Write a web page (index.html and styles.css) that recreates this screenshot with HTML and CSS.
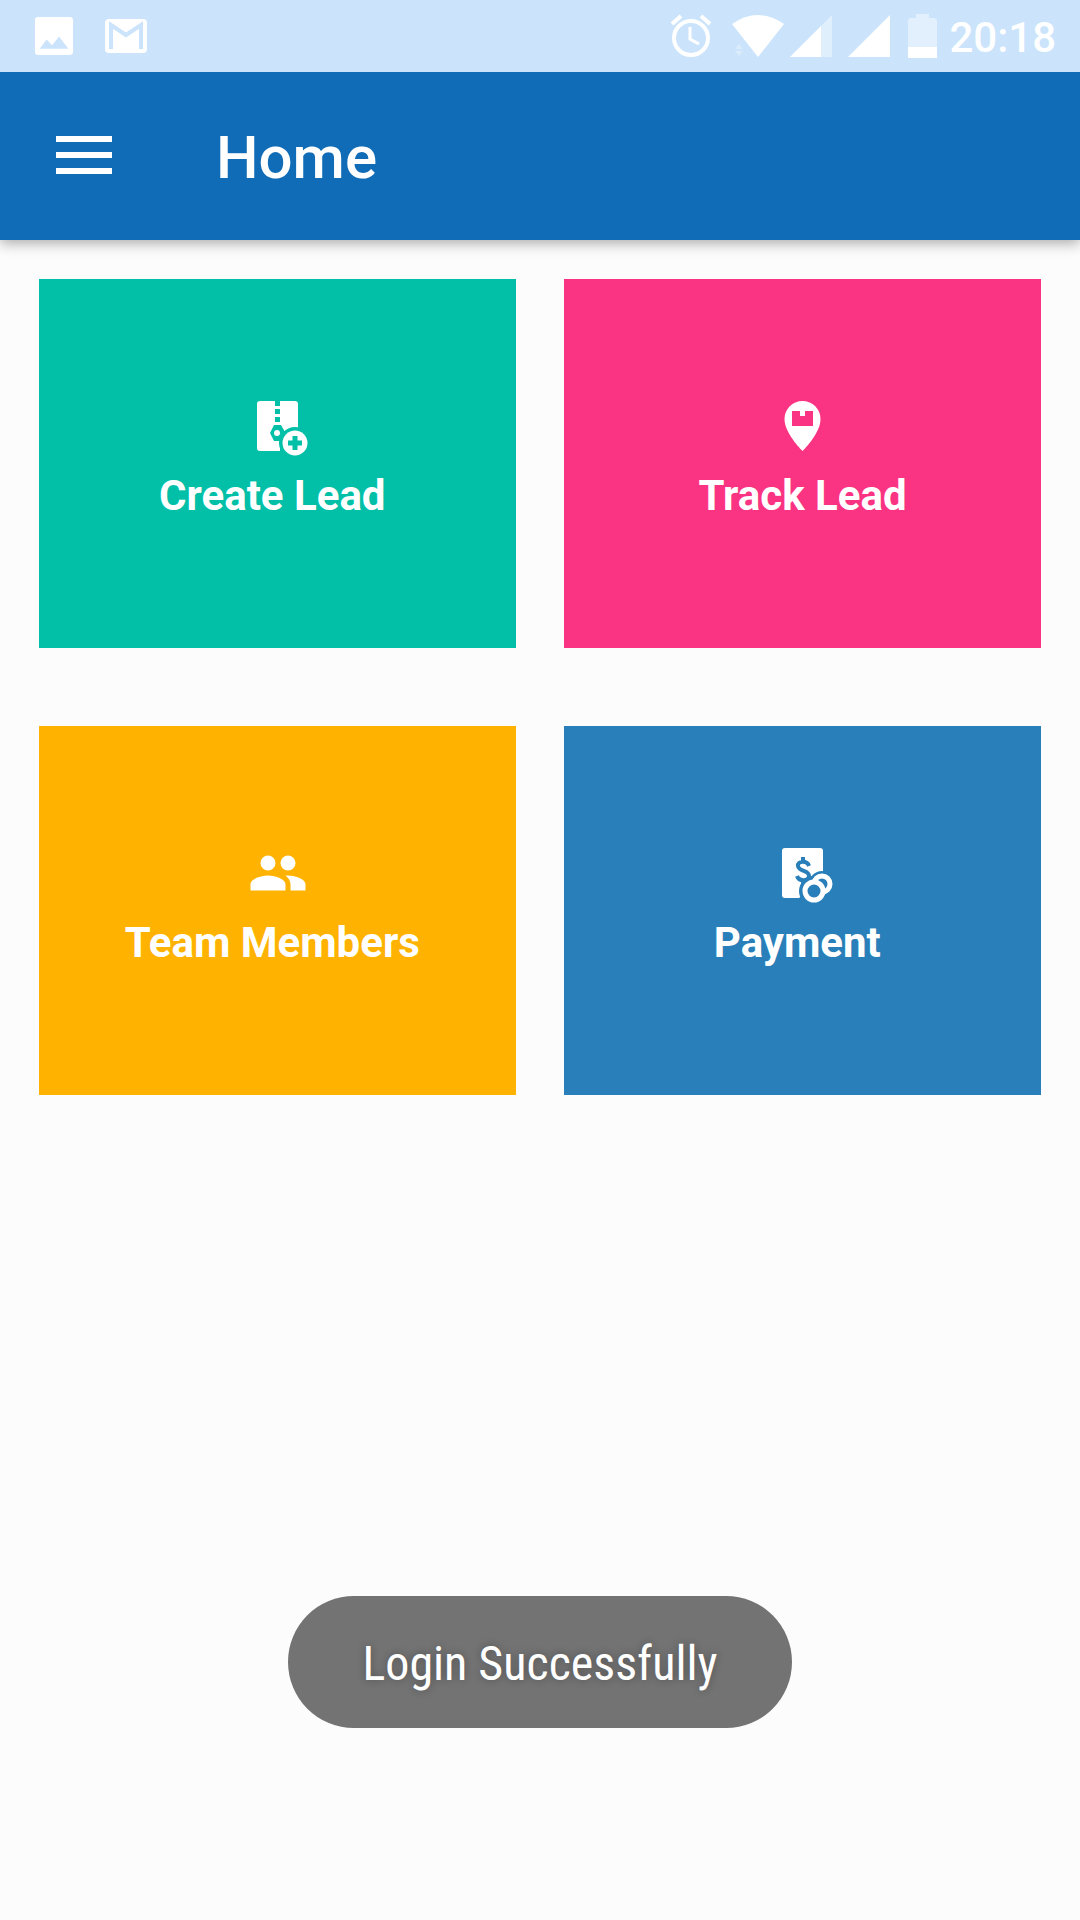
FILE: index.html
```html
<!DOCTYPE html>
<html lang="en">
<head>
  <meta charset="UTF-8" />
  <meta name="viewport" content="width=device-width, initial-scale=1.0"/>
  <title>Home</title>
  <link rel="stylesheet" href="styles.css">
</head>
<body>
  <div class="status-bar">
    <div class="notifications">
      <svg width="38" height="38" viewBox="3 3 18 18" fill="#fff">
        <path fill-rule="evenodd" d="M4.500 3h15A1.500 1.500 0 0 1 21 4.500v15a1.500 1.500 0 0 1-1.500 1.500h-15A1.500 1.500 0 0 1 3 19.500v-15A1.500 1.500 0 0 1 4.500 3zM5.200 18h13.600l-4.400-5.800-3.300 4.200-2.600-2.800z"/>
      </svg>
      <svg width="42" height="34" viewBox="0 0 42 34">
        <rect width="42" height="34" rx="4" fill="#fff"/>
        <path d="M6 30V6l15 10L36 6v24" fill="none" stroke="#cbe4fb" stroke-width="4"/>
      </svg>
    </div>
    <div class="system">
      <svg class="alarm" width="42" height="44" viewBox="0 0 42 44" fill="none" stroke="#fff" stroke-width="4">
        <circle cx="21" cy="24" r="17"/>
        <path d="M20 13v12l9 5" stroke-width="3"/>
        <path d="M2 10l9-8M40 10l-9-8"/>
      </svg>
      <svg class="wifi" width="52" height="42" viewBox="0 0 52 42">
        <path d="M0 9Q26-9 52 9L26 42z" fill="#fff"/>
        <path d="M3 34l4-5 4 5zM3 36h8l-4 5z" fill="#fff" opacity=".3"/>
      </svg>
      <svg class="signal" width="42" height="42" viewBox="0 0 42 42" fill="#fff">
        <path d="M31 11L42 0v42H31z" opacity=".4"/>
        <path d="M0 42l31-31v31z"/>
      </svg>
      <svg class="signal" width="42" height="42" viewBox="0 0 42 42">
        <path d="M0 42L42 0v42z" fill="#fff"/>
      </svg>
      <svg class="battery" width="29" height="44" viewBox="0 0 29 44" fill="#fff">
        <path d="M2 4h6V0h13v4h6l2 2v27H0V6z" opacity=".45"/>
        <path d="M0 33h29v11H0z"/>
      </svg>
      <span class="time">20:18</span>
    </div>
  </div>

  <header class="app-bar">
    <button type="button" class="menu-btn" aria-label="Menu">
      <svg width="56" height="38" viewBox="0 0 56 38" fill="#fff">
        <path d="M0 0h56v6H0zM0 16h56v6H0zM0 32h56v6H0z"/>
      </svg>
    </button>
    <h1>Home</h1>
  </header>

  <main class="tiles">
    <a href="#" class="tile create">
      <svg width="60" height="60" viewBox="0 0 60 60">
        <path d="M12 5h35q3 0 3 3v27H29v20H12q-3 0-3-3V8q0-3 3-3z" fill="#fff"/>
        <path d="M29 30h3v25h-3z" fill="#fff"/>
        <path d="M27 5h5v5h-5zM27 13h5v5h-5zM27 21h5v5h-5z" fill="#02bfa8"/>
        <path d="M26 29h7l4 7-4 9h-7l-4-8z" fill="#02bfa8"/>
        <circle cx="29" cy="37" r="3" fill="#fff"/>
        <circle cx="47" cy="47" r="16" fill="#02bfa8"/>
        <circle cx="47" cy="47" r="12.500" fill="#fff"/>
        <path d="M47 40v14M40 47h14" stroke="#02bfa8" stroke-width="5"/>
      </svg>
      <span>Create Lead&nbsp;</span>
    </a>
    <a href="#" class="tile track">
      <svg width="60" height="60" viewBox="0 0 60 60">
        <path d="M29.500 5c10 0 18 8 18 18 0 12-12 26-18 32-6-6-18-20-18-32 0-10 8-18 18-18z" fill="#fff"/>
        <path d="M19 15h8v5h5v-5h8v15H19z" fill="#fa3382"/>
      </svg>
      <span>Track Lead</span>
    </a>
    <a href="#" class="tile team">
      <svg width="60" height="60" viewBox="0 0 24 24" fill="#fff">
        <circle cx="8" cy="8" r="3"/>
        <circle cx="16" cy="8" r="3"/>
        <path d="M8 13c-2.330 0-7 1.170-7 3.500V19h14v-2.500c0-2.330-4.670-3.500-7-3.500zM16 13c-.29 0-.62.020-.97.050 1.160.84 1.970 1.970 1.970 3.450V19h6v-2.500c0-2.330-4.670-3.500-7-3.500z"/>
      </svg>
      <span>Team Members&nbsp;</span>
    </a>
    <a href="#" class="tile payment">
      <svg width="60" height="60" viewBox="0 0 60 60">
        <path d="M12 5h35q3 0 3 3v27L26 55H12q-3 0-3-3V8q0-3 3-3z" fill="#fff"/>
        <path d="M36 23c-2-6-12-5-11 0 1 6 11 4 11 10 0 5-10 6-12 0M30 14v5M30 36v5" fill="none" stroke="#297fb9" stroke-width="4"/>
        <circle cx="49" cy="41" r="13" fill="#297fb9"/>
        <circle cx="41" cy="48" r="15" fill="#297fb9"/>
        <circle cx="49" cy="41" r="8" fill="none" stroke="#fff" stroke-width="5"/>
        <circle cx="41" cy="48" r="9" fill="#297fb9" stroke="#fff" stroke-width="5"/>
      </svg>
      <span>Payment&nbsp;</span>
    </a>
  </main>

  <div class="toast-wrap">
    <div class="toast" role="status">Login Successfully</div>
  </div>
</body>
</html>
```
FILE: styles.css
```css
* {
  box-sizing: border-box;
}
body {
  background-color: #fcfcfc;
  color: #fff;
  font-family: Roboto, sans-serif;
  margin: 0;
}
svg {
  display: block;
  flex-shrink: 0;
}
.status-bar {
  position: relative;
  z-index: 1;
  display: flex;
  justify-content: space-between;
  align-items: center;
  height: 72px;
  padding: 0 24px 0 35px;
  background: #cbe4fb;
}
.notifications, .system {
  display: flex;
  align-items: center;
}
.notifications {
  gap: 32px;
}
.alarm {
  margin-right: 20px;
}
.wifi {
  margin-right: 6px;
}
.signal {
  margin-right: 16px;
}
.signal + .signal {
  margin-right: 18px;
}
.battery {
  margin-right: 12px;
}
.time {
  padding-top: 4px;
  font-size: 42px;
  font-weight: 500;
  line-height: 48px;
}
.app-bar {
  display: flex;
  align-items: center;
  gap: 104px;
  height: 168px;
  padding: 0 56px;
  background: #106cb6;
  box-shadow: 0 4px 12px rgba(0,0,0,0.3);
}
.menu-btn {
  padding: 0 0 2px;
  border: none;
  background: none;
  cursor: pointer;
}
h1 {
  margin: 0;
  padding-top: 4px;
  font-size: 60px;
  font-weight: 500;
  line-height: 72px;
}
.tiles {
  display: grid;
  grid-template-columns: 1fr 1fr;
  gap: 78px 48px;
  padding: 39px;
}
.tile {
  display: flex;
  flex-direction: column;
  align-items: center;
  justify-content: center;
  gap: 16px;
  min-height: 369px;
  padding-bottom: 12px;
  color: #fff;
  font-size: 42px;
  font-weight: bold;
  line-height: 48px;
  text-decoration: none;
}
.create {
  background: #02bfa8;
}
.track {
  background: #fa3382;
}
.team {
  background: #ffb300;
}
.payment {
  background: #297fb9;
}
.toast-wrap {
  position: fixed;
  left: 0;
  right: 0;
  bottom: 192px;
  display: flex;
  justify-content: center;
}
.toast {
  padding: 40px 74px 36px;
  border-radius: 66px;
  background: #737373;
  font-family: "Roboto Condensed", Roboto, sans-serif;
  font-size: 48px;
  line-height: 56px;
  text-shadow: 0 0 8px rgba(0,0,0,0.3);
}
```
